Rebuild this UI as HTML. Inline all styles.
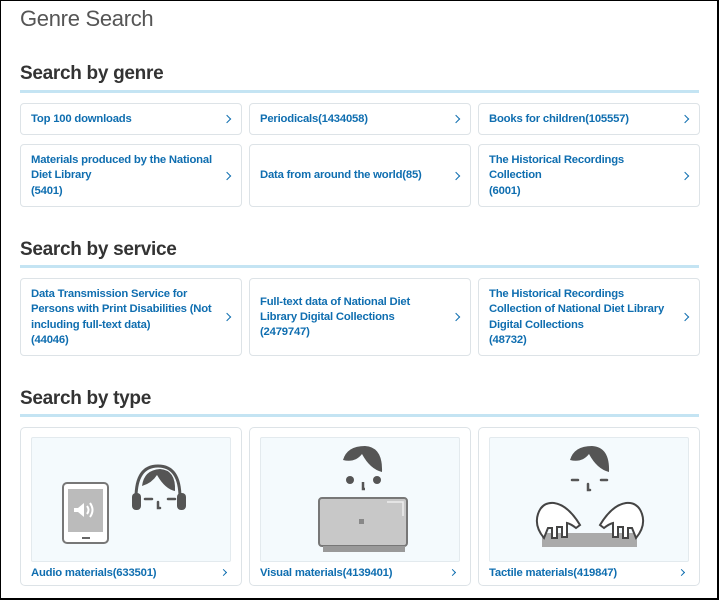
<!DOCTYPE html>
<html><head><meta charset="utf-8"><style>
*{margin:0;padding:0;box-sizing:border-box}
body{width:721px;height:600px;background:#fff;font-family:"Liberation Sans",sans-serif;position:relative;overflow:hidden}
.frame{position:absolute;left:0;top:0;width:719px;height:600px;border:1px solid #000;border-right:2px solid #000;border-bottom:2px solid #000}
.title{position:absolute;left:20px;top:6px;font-size:22px;color:#555;letter-spacing:-0.3px}
h2{position:absolute;left:20px;font-size:19px;font-weight:bold;color:#333;letter-spacing:-0.3px}
.ul{position:absolute;left:20px;width:679px;height:3px;background:#c4e4f3}
.c{position:absolute;border:1px solid #dde3e7;border-radius:4px;background:#fff;display:flex;align-items:center;padding:1px 22px 0 10px;color:#0f6eb0;font-weight:bold;font-size:11.3px;line-height:15.3px;letter-spacing:-0.2px}
.c:after{content:"";position:absolute;right:11px;top:50%;width:5px;height:5px;border-right:1.3px solid #0f6eb0;border-top:1.3px solid #0f6eb0;transform:translateY(-50%) rotate(45deg)}
.t{position:absolute;border:1px solid #dde3e7;border-radius:5px;background:#fff;width:222px;height:159px;top:427px}
.t .img{position:absolute;left:10px;top:9px;width:200px;height:125px;background:#f4fafd;border:1px solid #e3eaee;border-radius:2px;overflow:hidden}
.t .lb{position:absolute;left:10px;top:139px;color:#0f6eb0;font-weight:bold;font-size:11.3px;letter-spacing:-0.2px}
.t .ar{position:absolute;right:15px;top:142px;width:5px;height:5px;border-right:1.3px solid #0f6eb0;border-top:1.3px solid #0f6eb0;transform:rotate(45deg)}
</style></head><body>
<div class="frame"></div>
<div class="title">Genre Search</div>

<h2 style="top:63px">Search by genre</h2><div class="ul" style="top:90px"></div>
<div class="c" style="left:20px;top:103px;width:222px;height:32px">Top 100 downloads</div>
<div class="c" style="left:249px;top:103px;width:222px;height:32px">Periodicals(1434058)</div>
<div class="c" style="left:478px;top:103px;width:222px;height:32px">Books for children(105557)</div>
<div class="c" style="left:20px;top:144px;width:222px;height:63px">Materials produced by the National<br>Diet Library<br>(5401)</div>
<div class="c" style="left:249px;top:144px;width:222px;height:63px">Data from around the world(85)</div>
<div class="c" style="left:478px;top:144px;width:222px;height:63px">The Historical Recordings<br>Collection<br>(6001)</div>

<h2 style="top:239px">Search by service</h2><div class="ul" style="top:265px"></div>
<div class="c" style="left:20px;top:278px;width:222px;height:78px">Data Transmission Service for<br>Persons with Print Disabilities (Not<br>including full-text data)<br>(44046)</div>
<div class="c" style="left:249px;top:278px;width:222px;height:78px">Full-text data of National Diet<br>Library Digital Collections<br>(2479747)</div>
<div class="c" style="left:478px;top:278px;width:222px;height:78px">The Historical Recordings<br>Collection of National Diet Library<br>Digital Collections<br>(48732)</div>

<h2 style="top:388px">Search by type</h2><div class="ul" style="top:414px"></div>

<div class="t" style="left:20px"><div class="img"><svg width="200" height="125">
<rect x="31" y="45" width="45" height="60" rx="4" fill="#fff" stroke="#777" stroke-width="2"/>
<rect x="36" y="51" width="35" height="43" fill="#bbb"/>
<rect x="50" y="99" width="8" height="2" fill="#666"/>
<path d="M42 70h4l6-5v14l-6-5h-4z" fill="#fff"/>
<path d="M55 68q3 4 0 8M58 65q5 7 0 14" stroke="#fff" stroke-width="2" fill="none"/>
<path d="M104 60q0-32 22-32q22 0 22 32" stroke="#555" stroke-width="3" fill="none"/>
<path d="M110 48q2-16 18-17q16 1 15 22q-10-2-18-16q-5 8-15 11z" fill="#555"/>
<rect x="100" y="55" width="9" height="17" rx="4" fill="#555"/>
<rect x="145" y="55" width="9" height="17" rx="4" fill="#555"/>
<path d="M113 61h7M136 61h7M126 64v6h2" stroke="#555" stroke-width="2.5" fill="none" stroke-linecap="round"/>
</svg></div><div class="lb">Audio materials(633501)</div><div class="ar"></div></div>

<div class="t" style="left:249px"><div class="img"><svg width="200" height="125">
<path d="M82 22q4-14 22-14q18 1 17 26q-12-3-20-18q-7 9-19 6z" fill="#555"/>
<circle cx="89" cy="42" r="4" fill="#555"/><circle cx="116" cy="42" r="4" fill="#555"/>
<path d="M102 44v7h2" stroke="#555" stroke-width="2.5" fill="none"/>
<rect x="58" y="60" width="88" height="48" rx="3" fill="#c8c8c8" stroke="#777" stroke-width="2"/>
<path d="M126 64h16v14" stroke="#eee" stroke-width="1.5" fill="none"/>
<rect x="62" y="108" width="82" height="6" fill="#999"/>
<rect x="98" y="81" width="5" height="5" fill="#888"/>
</svg></div><div class="lb">Visual materials(4139401)</div><div class="ar"></div></div>

<div class="t" style="left:478px"><div class="img"><svg width="200" height="125">
<path d="M80 22q4-14 22-14q18 1 17 26q-12-3-20-18q-7 9-19 6z" fill="#555"/>
<path d="M82 42h6M111 42h6M98 46v6h2" stroke="#555" stroke-width="2.5" fill="none" stroke-linecap="round"/>
<rect x="52" y="98" width="95" height="11" fill="#aaa"/>
<path d="M52 98h95v-3h-95z" fill="#aaa"/>
<path d="M54 100q-10-12-6-24q4-12 16-11q14 2 26 22l-4 3q-5-4-9-5v14h-5v-10h-5v11h-5v-10h-4z" fill="#fff" stroke="#444" stroke-width="2"/>
<path d="M146 100q10-12 6-24q-4-12-16-11q-14 2-26 22l4 3q5-4 9-5v14h5v-10h5v11h5v-10h4z" fill="#fff" stroke="#444" stroke-width="2"/>
</svg></div><div class="lb">Tactile materials(419847)</div><div class="ar"></div></div>
</body></html>
